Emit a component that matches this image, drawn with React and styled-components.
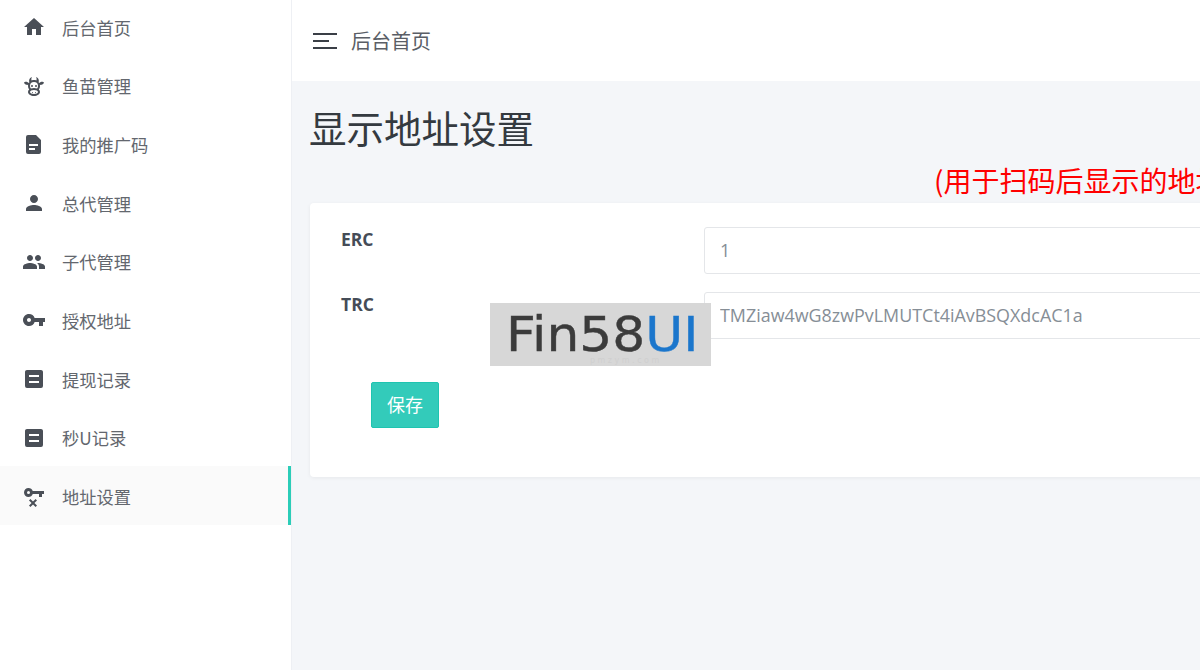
import React from 'react';
import styled, { createGlobalStyle } from 'styled-components';
import { MdHome, MdPerson, MdPeople, MdVpnKey } from 'react-icons/md';

const cow =
  'M10.5,18A0.5,0.5 0 0,1 11,18.5A0.5,0.5 0 0,1 10.5,19A0.5,0.5 0 0,1 10,18.5A0.5,0.5 0 0,1 10.5,18M13.5,18A0.5,0.5 0 0,1 14,18.5A0.5,0.5 0 0,1 13.5,19A0.5,0.5 0 0,1 13,18.5A0.5,0.5 0 0,1 13.5,18M10,11A1,1 0 0,1 11,12A1,1 0 0,1 10,13A1,1 0 0,1 9,12A1,1 0 0,1 10,11M14,11A1,1 0 0,1 15,12A1,1 0 0,1 14,13A1,1 0 0,1 13,12A1,1 0 0,1 14,11M18,18C18,20.21 15.31,22 12,22C8.69,22 6,20.21 6,18C6,17.1 6.45,16.27 7.2,15.6C6.45,14.6 6,13.35 6,12L6.12,10.78C5.58,10.93 4.93,10.93 4.4,10.78C3.38,10.5 1.84,9.35 2.07,8.55C2.3,7.75 4.21,7.6 5.23,7.9C5.82,8.07 6.45,8.5 6.82,8.96L7.39,8.15C6.79,7.05 7,4 10,3L9.91,3.14C9.63,3.58 8.91,4.97 9.67,6.47C10.39,6.17 11.17,6 12,6C12.83,6 13.61,6.17 14.33,6.47C15.09,4.97 14.37,3.58 14.09,3.14L14,3C17,4 17.21,7.05 16.61,8.15L17.18,8.96C17.55,8.5 18.18,8.07 18.77,7.9C19.79,7.6 21.7,7.75 21.93,8.55C22.16,9.35 20.62,10.5 19.6,10.78C19.07,10.93 18.42,10.93 17.88,10.78L18,12C18,13.35 17.55,14.6 16.8,15.6C17.55,16.27 18,17.1 18,18M12,16C9.79,16 8,16.9 8,18C8,19.1 9.79,20 12,20C14.21,20 16,19.1 16,18C16,16.9 14.21,16 12,16M12,14C13.12,14 14.17,14.21 15.07,14.56C15.65,13.87 16,13 16,12A4,4 0 0,0 12,8A4,4 0 0,0 8,12C8,13 8.35,13.87 8.93,14.56C9.83,14.21 10.88,14 12,14Z';
const doc =
  'M6,3H14L19,8V20A2,2 0 0,1 17,22H6A2,2 0 0,1 4,20V5A2,2 0 0,1 6,3M7,12V14H16V12H7M7,16V18H13V16H7Z';
const equalBox =
  'M19,3H5C3.89,3 3,3.89 3,5V19A2,2 0 0,0 5,21H19A2,2 0 0,0 21,19V5C21,3.89 20.1,3 19,3M7,8H17V10H7V8M7,16V14H17V16H7Z';
const keyRemove =
  'M6.5,3C8.46,3 10.13,4.25 10.74,6H22V9H20V12H17V9H10.74C10.13,10.75 8.46,12 6.5,12C4,12 2,10 2,7.5C2,5 4,3 6.5,3M6.5,6A1.5,1.5 0 0,0 5,7.5A1.5,1.5 0 0,0 6.5,9A1.5,1.5 0 0,0 8,7.5A1.5,1.5 0 0,0 6.5,6M8.4,14L11,16.6L13.6,14L15,15.4L12.4,18L15,20.6L13.6,22L11,19.4L8.4,22L7,20.6L9.6,18L7,15.4Z';

const PathIcon = ({ d }) => (
  <svg width="24" height="24" viewBox="0 0 24 24" fill="currentColor" fillRule="evenodd">
    <path d={d} />
  </svg>
);

const menu = [
  { label: '后台首页', icon: <MdHome size={24} /> },
  { label: '鱼苗管理', icon: <PathIcon d={cow} /> },
  { label: '我的推广码', icon: <PathIcon d={doc} /> },
  { label: '总代管理', icon: <MdPerson size={24} /> },
  { label: '子代管理', icon: <MdPeople size={24} /> },
  { label: '授权地址', icon: <MdVpnKey size={24} /> },
  { label: '提现记录', icon: <PathIcon d={equalBox} /> },
  { label: '秒U记录', icon: <PathIcon d={equalBox} /> },
  { label: '地址设置', icon: <PathIcon d={keyRemove} />, active: true },
];

const App = () => {
  return (
    <>
      <GlobalStyle />
      <Page>
        <Sidebar>
          <MenuList>
            {menu.map((item) => (
              <MenuItem key={item.label} $active={item.active}>
                <IconSlot>{item.icon}</IconSlot>
                <span>{item.label}</span>
              </MenuItem>
            ))}
          </MenuList>
        </Sidebar>
        <Main>
          <TopBar>
            <Burger>
              <i />
              <i />
              <i />
            </Burger>
            <TopTitle>后台首页</TopTitle>
          </TopBar>
          <Content>
            <PageTitle>显示地址设置</PageTitle>
            <Hint>(用于扫码后显示的地址)</Hint>
            <Card>
              <FormRow>
                <Label>ERC</Label>
                <Input readOnly value="1" />
              </FormRow>
              <FormRow>
                <Label>TRC</Label>
                <Input readOnly value="TMZiaw4wG8zwPvLMUTCt4iAvBSQXdcAC1a" />
              </FormRow>
              <SaveButton>保存</SaveButton>
            </Card>
          </Content>
        </Main>
        <Watermark>
          <WatermarkText>
            Fin58<b>UI</b>
          </WatermarkText>
          <WatermarkSite>pmzym.com</WatermarkSite>
        </Watermark>
      </Page>
    </>
  );
};

const GlobalStyle = createGlobalStyle`
  html, body {
    margin: 0;
    padding: 0;
    height: 100%;
    overflow: hidden;
  }
  body {
    font-family: "Open Sans", "Noto Sans CJK SC", sans-serif;
    background: #f4f6f9;
  }
`;

const Page = styled.div`
  position: relative;
  display: flex;
  width: 1200px;
  height: 670px;
  overflow: hidden;
`;

const Sidebar = styled.aside`
  flex: 0 0 292px;
  box-sizing: border-box;
  height: 670px;
  overflow: hidden;
  background: #fff;
  border-right: 1px solid #eef0f4;
`;

const MenuList = styled.nav`
  display: flex;
  flex-direction: column;
  margin-top: -3.3px;
`;

const MenuItem = styled.div`
  display: flex;
  align-items: center;
  box-sizing: border-box;
  height: 58.7px;
  padding-left: 22px;
  gap: 16px;
  font-size: 17.25px;
  color: #63676e;
  font-family: "Noto Sans CJK SC", sans-serif;
  background: ${({ $active }) => ($active ? '#fafafa' : 'transparent')};
  border-right: 3px solid ${({ $active }) => ($active ? '#2bcdb8' : 'transparent')};

  span {
    position: relative;
    top: 1px;
  }
`;

const IconSlot = styled.span`
  display: flex;
  width: 24px;
  height: 24px;
  color: #4a4f57;
`;

const Main = styled.main`
  flex: 1;
  min-width: 0;
  display: flex;
  flex-direction: column;
`;

const TopBar = styled.header`
  display: flex;
  align-items: center;
  gap: 14px;
  box-sizing: border-box;
  height: 81px;
  padding-left: 21px;
  background: #fff;
`;

const Burger = styled.div`
  display: flex;
  flex-direction: column;
  gap: 5px;
  width: 24px;

  i {
    display: block;
    height: 2px;
    background: #3a3f46;
  }
  i:nth-child(2) {
    width: 16px;
  }
`;

const TopTitle = styled.div`
  font-size: 20px;
  line-height: 28px;
  color: #5a5e66;
  font-family: "Noto Sans CJK SC", sans-serif;
`;

const Content = styled.div`
  padding: 0 0 0 18px;
`;

const PageTitle = styled.h1`
  margin: 19px 0 1px -1px;
  font-size: 37.5px;
  line-height: 54px;
  font-weight: 400;
  color: #343a40;
  font-family: "Noto Sans CJK SC", sans-serif;
`;

const Hint = styled.div`
  margin: 0 0 0 624px;
  height: 48px;
  font-size: 28px;
  line-height: 51px;
  color: #ff0000;
  white-space: nowrap;
  font-family: "Noto Sans CJK SC", sans-serif;
`;

const Card = styled.section`
  box-sizing: border-box;
  width: 1400px;
  height: 274px;
  padding: 24px 31px 0;
  background: #fff;
  border-radius: 4px;
  box-shadow: 0 1px 4px rgba(0, 0, 0, 0.06);
`;

const FormRow = styled.div`
  display: grid;
  grid-template-columns: 363px 1fr;
  margin-bottom: 18px;
`;

const Label = styled.label`
  font-size: 17.5px;
  font-weight: 700;
  line-height: 25px;
  color: #454c57;
`;

const Input = styled.input`
  box-sizing: border-box;
  height: 47px;
  padding: 0 15px 1px;
  border: 1px solid #e4e6e9;
  border-radius: 3px;
  font: 400 17.9px "Open Sans", sans-serif;
  color: #868e96;
  outline: none;
  background: #fff;
`;

const SaveButton = styled.button`
  display: block;
  width: 68px;
  height: 46px;
  margin: 43px 0 0 30px;
  padding: 0 0 3px;
  border: 1px solid #1fc4b0;
  border-radius: 2px;
  background: #33cbba;
  color: #fff;
  font-size: 18px;
  font-family: "Noto Sans CJK SC", sans-serif;
`;

const Watermark = styled.div`
  position: absolute;
  left: 490px;
  top: 303px;
  width: 221px;
  height: 63px;
  box-sizing: border-box;
  padding-left: 16px;
  background: #d7d7d7;
  overflow: hidden;
`;

const WatermarkText = styled.div`
  height: 50px;
  color: #3b3b3b;
  font: 400 48px/62px "DejaVu Sans", sans-serif;
  white-space: nowrap;
  transform: scaleX(1.08);
  transform-origin: left center;
  -webkit-text-stroke: 0.4px currentColor;

  b {
    font-weight: 400;
    color: #1b76cc;
  }
`;

const WatermarkSite = styled.div`
  margin: 3px 0 0 84px;
  font: 400 8px/10px "DejaVu Sans", sans-serif;
  letter-spacing: 2.5px;
  color: #cfcfcf;
`;

export default App;
